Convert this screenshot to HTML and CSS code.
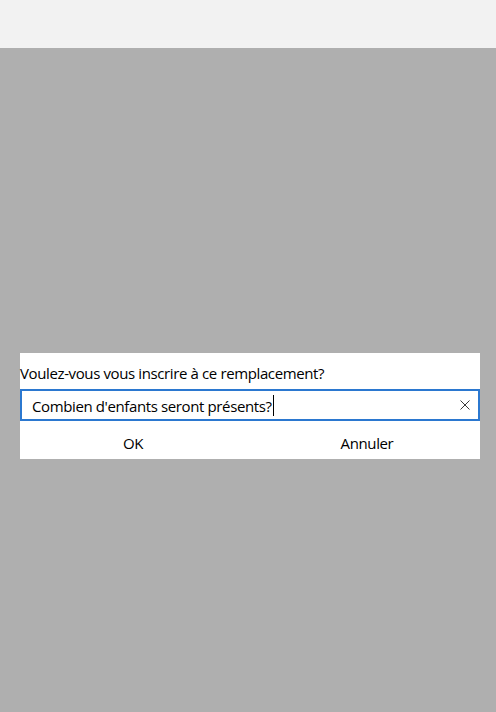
FILE: index.html
```html
<!DOCTYPE html>
<html lang="fr">
<head>
<meta charset="utf-8">
<title>Prompt</title>
<link rel="stylesheet" href="styles.css">
</head>
<body>
<div class="titlebar"></div>
<main class="overlay">
  <div class="dialog">
    <div class="dialog-title">Voulez-vous vous inscrire à ce remplacement?</div>
    <div class="entry">
      <span class="entry-text">Combien d'enfants seront présents?</span><span class="caret"></span>
      <span class="clear">
        <svg width="10" height="10" viewBox="0 0 10 10"><path d="M0.5 0.5 L9.5 9.5 M9.5 0.5 L0.5 9.5" stroke="#3a3a3a" stroke-width="1" fill="none"/></svg>
      </span>
    </div>
    <div class="buttons">
      <div class="btn">OK</div>
      <div class="btn">Annuler</div>
    </div>
  </div>
</main>
</body>
</html>
```

FILE: styles.css
```css
html, body {
  margin: 0;
  padding: 0;
  height: 100%;
}
body {
  background: #afafaf;
  font-family: "Open Sans", "Noto Sans", sans-serif;
  font-size: 15px;
  letter-spacing: -0.38px;
  color: #000;
  display: flex;
  flex-direction: column;
}
.titlebar {
  height: 48px;
  background: #f2f2f2;
  flex: none;
}
.overlay {
  flex: 1;
  padding: 305px 16px 0 20px;
}
.dialog {
  background: #fff;
  width: 460px;
}
.dialog-title {
  line-height: 20px;
  padding: 10px 0 6px 0;
  white-space: nowrap;
}
.entry {
  height: 28px;
  border: 2px solid #2b78d0;
  display: flex;
  align-items: center;
  padding: 0 0 0 10px;
  line-height: 20px;
}
.entry-text {
  white-space: nowrap;
  padding-top: 1px;
}
.caret {
  width: 1px;
  height: 21px;
  background: #000;
  margin-left: 1px;
  margin-top: 1px;
}
.clear {
  margin-left: auto;
  width: 30px;
  display: flex;
  justify-content: center;
  align-items: center;
}
.clear svg { display: block; margin-left: 4px; }
.buttons {
  display: grid;
  grid-template-columns: 1fr 1fr;
  column-gap: 8px;
  height: 38px;
}
.btn {
  text-align: center;
  line-height: 20px;
  padding-top: 12px;
}
```
